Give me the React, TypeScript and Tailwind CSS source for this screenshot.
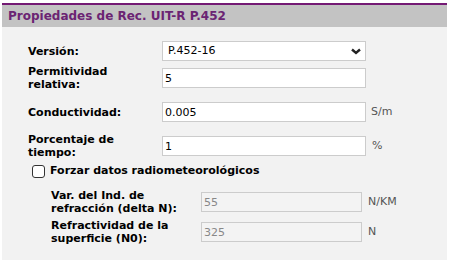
const font = { fontFamily: '"DejaVu Sans", Verdana, sans-serif' };

const Row = ({
  label,
  h,
  mt,
  children,
}: {
  label: React.ReactNode;
  h: string;
  mt: string;
  children: React.ReactNode;
}) => (
  <div className={`flex items-center ${h} ${mt}`}>
    <div className="w-[134px] font-bold text-[11px] leading-[13px] text-black">{label}</div>
    {children}
  </div>
);

const Unit = ({ children, className = "" }: { children: React.ReactNode; className?: string }) => (
  <span className={`text-[11px] text-[#555] ${className}`}>{children}</span>
);

const App = () => {
  return (
    <div className="w-[451px] h-[265px] bg-white pt-[3px] pl-[2px]" style={font}>
      <div className="w-[445px] h-[257px] bg-[#f2f2f2]">
        <div className="h-[24px] border-t-2 border-[#741a74] bg-[#c3c3c3] flex items-center pl-[6px]">
          <span className="font-bold text-[12px] text-[#6b2473]">Propiedades de Rec. UIT-R P.452</span>
        </div>
        <div className="pl-[26px] pt-[14px]">
          <Row label="Versión:" h="h-[20px]" mt="mt-0">
            <div className="w-[204px] h-[20px] bg-white border border-[#cccccc] flex items-center justify-between pl-[5px] pr-[4px]">
              <span className="text-[11px] text-black">P.452-16</span>
              <svg width="10" height="7" viewBox="0 0 10 7">
                <polyline points="1,1.5 5,5 9,1.5" fill="none" stroke="#222" strokeWidth="2.4" />
              </svg>
            </div>
          </Row>
          <Row label={<>Permitividad<br />relativa:</>} h="h-[26px]" mt="mt-[4px]">
            <input
              readOnly
              value="5"
              className="w-[204px] h-[20px] bg-white border border-[#cccccc] px-[2px] text-[11px] text-black outline-none"
            />
          </Row>
          <Row label="Conductividad:" h="h-[20px]" mt="mt-[11px]">
            <input
              readOnly
              value="0.005"
              className="w-[204px] h-[20px] bg-white border border-[#cccccc] px-[2px] text-[11px] text-black outline-none"
            />
            <Unit className="ml-[5px]">S/m</Unit>
          </Row>
          <Row label={<>Porcentaje de<br />tiempo:</>} h="h-[26px]" mt="mt-[11px]">
            <input
              readOnly
              value="1"
              className="w-[204px] h-[20px] bg-white border border-[#cccccc] px-[2px] text-[11px] text-black outline-none"
            />
            <Unit className="ml-[6px]">%</Unit>
          </Row>
          <label className="flex items-center h-[14px] mt-[5px] pl-[4px]">
            <span className="w-[13px] h-[13px] border border-[#333] rounded-[3px] bg-white" />
            <span className="ml-[5px] font-bold text-[11px] text-black">Forzar datos radiometeorológicos</span>
          </label>
          <div className="pl-[23px]">
            <div className="flex items-center h-[26px] mt-[11px]">
              <div className="w-[150px] font-bold text-[11px] leading-[13px] text-black">
                Var. del Ind. de
                <br />
                refracción (delta N):
              </div>
              <input
                readOnly
                disabled
                value="55"
                className="w-[161px] h-[20px] bg-[#f3f3f3] border border-[#cccccc] px-[2px] text-[11px] text-[#888] outline-none"
              />
              <Unit className="ml-[6px]">N/KM</Unit>
            </div>
            <div className="flex items-center h-[26px] mt-[4px]">
              <div className="w-[150px] font-bold text-[11px] leading-[13px] text-black">
                Refractividad de la
                <br />
                superficie (N0):
              </div>
              <input
                readOnly
                disabled
                value="325"
                className="w-[161px] h-[20px] bg-[#f3f3f3] border border-[#cccccc] px-[2px] text-[11px] text-[#888] outline-none"
              />
              <Unit className="ml-[6px]">N</Unit>
            </div>
          </div>
        </div>
      </div>
    </div>
  );
};

export default App;
